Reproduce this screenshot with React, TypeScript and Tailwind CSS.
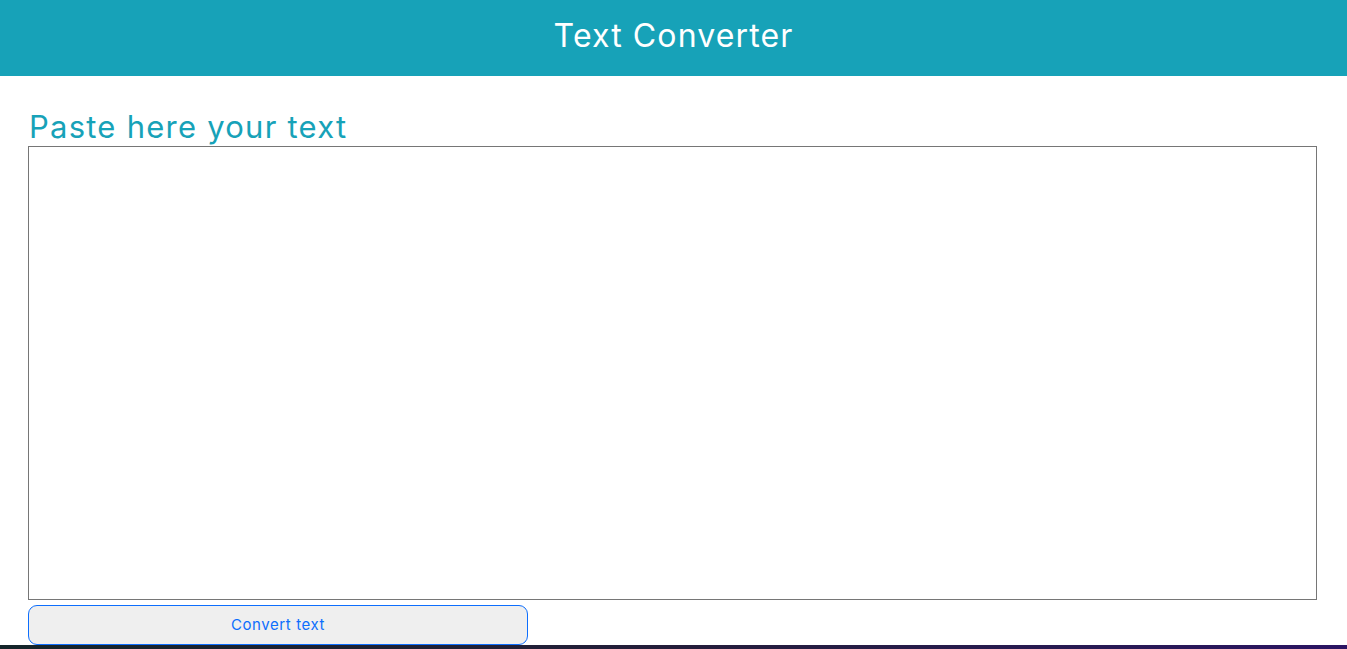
export default function App() {
  return (
    <div className="min-h-screen flex flex-col bg-white" style={{ fontFamily: 'Inter, "Noto Sans", sans-serif' }}>
      <header className="h-[76px] bg-[#17a2b8] flex items-center justify-center pb-[4px]">
        <h1 className="text-[32px] text-white tracking-[0.035em]">Text Converter</h1>
      </header>

      <main className="px-[28px] pt-[31px] pb-0 flex flex-col">
        <h2 className="text-[31px] leading-[39px] text-[#17a2b8] pl-[1px] tracking-[0.04em]">Paste here your text</h2>
        <textarea
          autoFocus
          className="mt-0 w-[1289px] h-[454px] border border-[#767676] p-[10px] text-[16px] text-black resize-none outline-none"
        />
        <button className="mt-[5px] w-[500px] h-[40px] bg-[#efefef] border border-[#0d6efd] rounded-[9px] text-[#0d6efd] text-[15px] tracking-[0.04em]">
          Convert text
        </button>
      </main>

      <footer className="h-[120px] bg-gradient-to-r from-[#14252a] via-[#241d3a] to-[#2b1463]" />
    </div>
  );
}
